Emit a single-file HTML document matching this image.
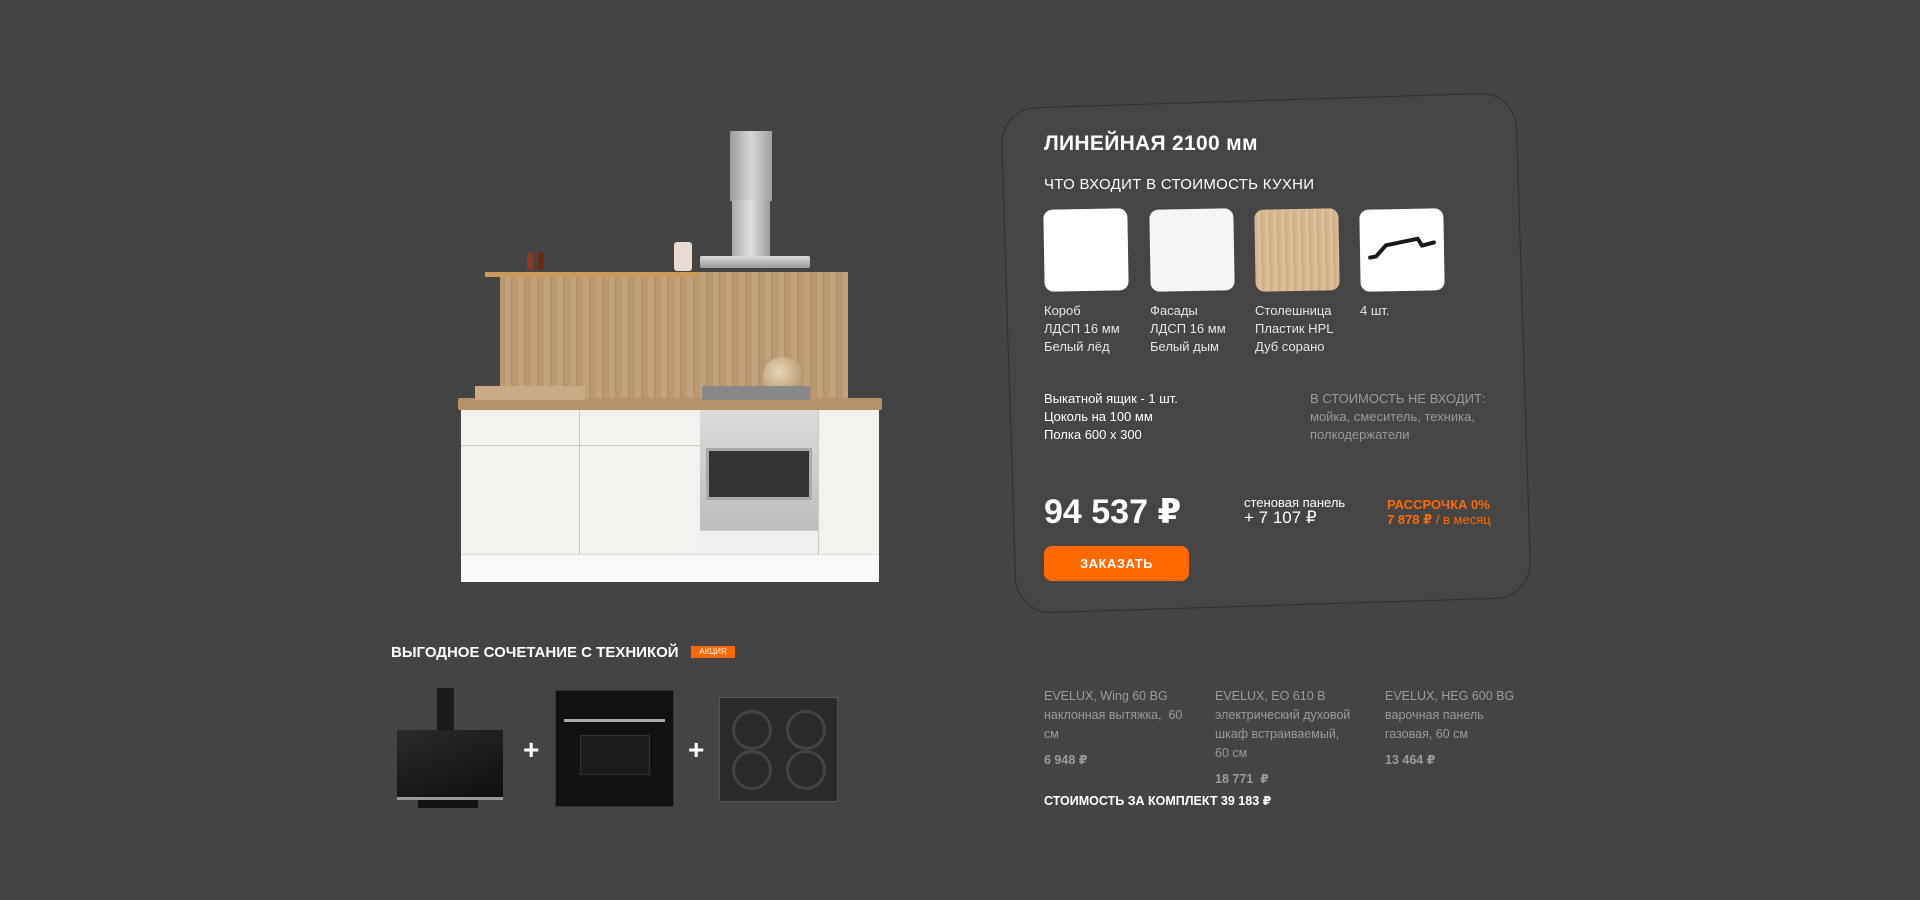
<!DOCTYPE html>
<html><head><meta charset="utf-8"><style>
*{margin:0;padding:0;box-sizing:border-box}
body{width:1920px;height:900px;background:#444444;font-family:"Liberation Sans","DejaVu Sans",sans-serif;color:#fff;position:relative;overflow:hidden}
.a{position:absolute}
.card{left:1008px;top:100px;width:516px;height:506px;border:1px solid #2e2e2e;border-radius:36px;transform:rotate(-1.8deg);background:#454545}
.sw{width:84px;height:82px;border-radius:9px;background:#fff;transform:rotate(-1deg)}
.lbl{font-size:13px;line-height:18px;color:#e6e6e6}
.g{color:#9a9a9a}
.k{font-size:12.5px;line-height:19px;color:#9b9b9b}
</style></head><body>

<!-- kitchen -->
<div class="a" style="left:730px;top:131px;width:42px;height:70px;background:linear-gradient(90deg,#9a9a9a,#d8d8d8,#a0a0a0)"></div>
<div class="a" style="left:732px;top:200px;width:38px;height:56px;background:linear-gradient(90deg,#aaa,#e0e0e0,#9c9c9c)"></div>
<div class="a" style="left:700px;top:256px;width:110px;height:12px;background:linear-gradient(#ddd,#999);border-radius:2px"></div>
<div class="a" style="left:500px;top:272px;width:348px;height:126px;background:repeating-linear-gradient(90deg,#b99872 0 5px,#c2a27d 5px 11px,#b4916a 11px 13px)"></div>
<div class="a" style="left:485px;top:272px;width:215px;height:5px;background:#c99a5a"></div>
<div class="a" style="left:527px;top:252px;width:6px;height:18px;background:#8b3a1d;border-radius:2px"></div>
<div class="a" style="left:538px;top:252px;width:6px;height:18px;background:#6b2a10;border-radius:2px"></div>
<div class="a" style="left:674px;top:242px;width:18px;height:29px;background:#eadbd1;border-radius:3px"></div>
<div class="a" style="left:763px;top:357px;width:40px;height:36px;background:radial-gradient(circle at 40% 40%,#e8d7bb,#a78a5a);border-radius:50% 50% 6px 6px"></div>
<div class="a" style="left:458px;top:398px;width:424px;height:12px;background:#b4926a;border-radius:2px"></div>
<div class="a" style="left:475px;top:386px;width:110px;height:14px;background:#c9aa85"></div>
<div class="a" style="left:702px;top:386px;width:108px;height:14px;background:#888"></div>
<div class="a" style="left:461px;top:410px;width:418px;height:144px;background:#f4f2ee"></div>
<div class="a" style="left:579px;top:410px;width:1px;height:144px;background:#d0c8bc"></div>
<div class="a" style="left:461px;top:445px;width:118px;height:1px;background:#d0c8bc"></div>
<div class="a" style="left:580px;top:445px;width:120px;height:1px;background:#d0c8bc"></div>
<div class="a" style="left:818px;top:410px;width:1px;height:144px;background:#d0c8bc"></div>
<div class="a" style="left:700px;top:410px;width:118px;height:120px;background:linear-gradient(#dcdcdc,#bdbdbd)"></div>
<div class="a" style="left:706px;top:448px;width:106px;height:52px;background:#333;border:3px solid #aaa"></div>
<div class="a" style="left:700px;top:530px;width:118px;height:24px;background:#f0f0f0;border-top:1px solid #ccc"></div>
<div class="a" style="left:461px;top:554px;width:418px;height:28px;background:#fafafa;border-top:1px solid #ddd"></div>

<!-- card -->
<div class="a card"></div>
<div class="a" style="left:1044px;top:132px;font-size:21px;font-weight:bold;letter-spacing:.3px">ЛИНЕЙНАЯ 2100 мм</div>
<div class="a" style="left:1044px;top:176px;font-size:15px;letter-spacing:.3px">ЧТО ВХОДИТ В СТОИМОСТЬ КУХНИ</div>
<div class="a sw" style="left:1044px;top:209px"></div>
<div class="a sw" style="left:1150px;top:209px;background:#f5f5f3"></div>
<div class="a sw" style="left:1255px;top:209px;background:repeating-linear-gradient(90deg,#d6b78f 0 3px,#dcc19c 3px 6px,#cfae84 6px 8px)"></div>
<div class="a sw" style="left:1360px;top:209px"><svg width="84" height="82"><path d="M10 48 L16 47 L26 36 L58 30 L62 37 L74 34" fill="none" stroke="#1a1a1a" stroke-width="4" stroke-linecap="round" stroke-linejoin="round"/></svg></div>
<div class="a lbl" style="left:1044px;top:302px">Короб<br>ЛДСП 16 мм<br>Белый лёд</div>
<div class="a lbl" style="left:1150px;top:302px">Фасады<br>ЛДСП 16 мм<br>Белый дым</div>
<div class="a lbl" style="left:1255px;top:302px">Столешница<br>Пластик HPL<br>Дуб сорано</div>
<div class="a lbl" style="left:1360px;top:302px">4 шт.</div>
<div class="a lbl" style="left:1044px;top:390px;color:#fff">Выкатной ящик - 1 шт.<br>Цоколь на 100 мм<br>Полка 600 х 300</div>
<div class="a lbl g" style="left:1310px;top:390px">В СТОИМОСТЬ НЕ ВХОДИТ:<br>мойка, смеситель, техника,<br>полкодержатели</div>
<div class="a" style="left:1044px;top:492px;font-size:34px;font-weight:bold">94 537 ₽</div>
<div class="a" style="left:1244px;top:495px;font-size:13px;line-height:15px">стеновая панель<br><span style="font-size:17px">+ 7 107 ₽</span></div>
<div class="a" style="left:1387px;top:497px;font-size:13px;line-height:15px;color:#ff6a00;font-weight:bold">РАССРОЧКА 0%<br>7 878 ₽ <span style="font-weight:normal">/ в месяц</span></div>
<div class="a" style="left:1044px;top:546px;width:145px;height:35px;background:#ff6900;border-radius:8px;font-size:13px;font-weight:bold;text-align:center;line-height:35px;letter-spacing:.5px">ЗАКАЗАТЬ</div>

<!-- bottom -->
<div class="a" style="left:391px;top:644px;font-size:15px;font-weight:bold">ВЫГОДНОЕ СОЧЕТАНИЕ С ТЕХНИКОЙ</div>
<div class="a" style="left:691px;top:646px;width:44px;height:12px;background:#ff6900;font-size:8px;text-align:center;line-height:12px">АКЦИЯ</div>
<div class="a" style="left:437px;top:688px;width:17px;height:48px;background:#1a1a1a"></div>
<div class="a" style="left:397px;top:730px;width:106px;height:70px;background:linear-gradient(160deg,#2a2a2a,#0e0e0e);border-bottom:3px solid #999"></div>
<div class="a" style="left:418px;top:800px;width:60px;height:8px;background:#111"></div>
<div class="a" style="left:523px;top:734px;font-size:28px;font-weight:bold">+</div>
<div class="a" style="left:555px;top:690px;width:119px;height:117px;background:#111;border:1px solid #333"></div>
<div class="a" style="left:564px;top:719px;width:101px;height:3px;background:#aaa"></div>
<div class="a" style="left:580px;top:735px;width:70px;height:40px;background:#1c1c1c;border:1px solid #333"></div>
<div class="a" style="left:688px;top:734px;font-size:28px;font-weight:bold">+</div>
<div class="a" style="left:719px;top:697px;width:119px;height:105px;background:#2a2a2a;border:1px solid #555"></div>
<div class="a" style="left:732px;top:710px;width:40px;height:40px;border:3px solid #444;border-radius:50%"></div>
<div class="a" style="left:786px;top:710px;width:40px;height:40px;border:3px solid #444;border-radius:50%"></div>
<div class="a" style="left:732px;top:750px;width:40px;height:40px;border:3px solid #444;border-radius:50%"></div>
<div class="a" style="left:786px;top:750px;width:40px;height:40px;border:3px solid #444;border-radius:50%"></div>
<div class="a k" style="left:1044px;top:687px;width:150px">EVELUX, Wing 60 BG<br>наклонная вытяжка,&nbsp; 60 см<br><b style="line-height:32px">6 948 ₽</b></div>
<div class="a k" style="left:1215px;top:687px;width:160px">EVELUX, EO 610 B<br>электрический духовой<br>шкаф встраиваемый,<br>60 см<br><b style="line-height:32px">18 771&nbsp; ₽</b></div>
<div class="a k" style="left:1385px;top:687px;width:160px">EVELUX, HEG 600 BG<br>варочная панель<br>газовая, 60 см<br><b style="line-height:32px">13 464 ₽</b></div>
<div class="a" style="left:1044px;top:793px;font-size:12.5px;font-weight:bold">СТОИМОСТЬ ЗА КОМПЛЕКТ 39 183 ₽</div>
</body></html>
